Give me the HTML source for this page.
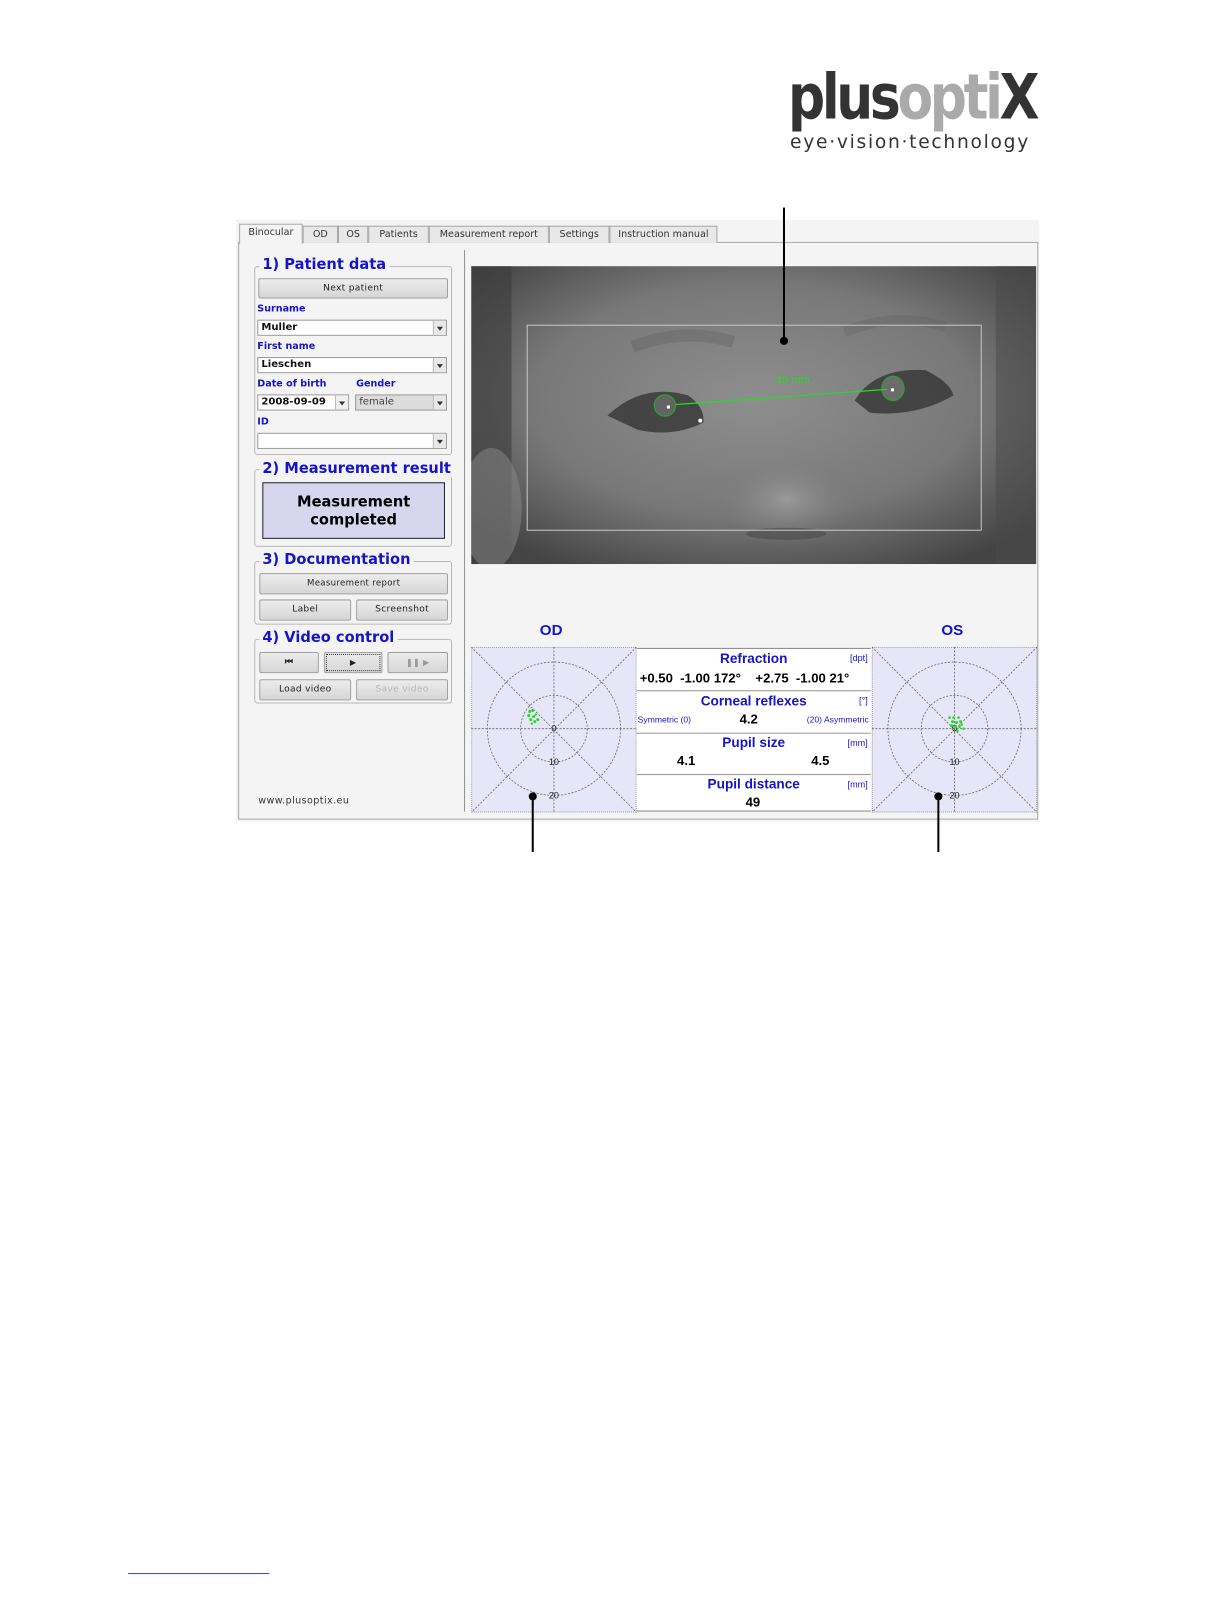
<!DOCTYPE html>
<html><head><meta charset="utf-8"><style>
*{margin:0;padding:0;box-sizing:border-box}
html,body{width:1224px;height:1584px;background:#fff;overflow:hidden;font-family:"DejaVu Sans","Liberation Sans",sans-serif}
#w{position:absolute;left:0;top:0;width:1224px;height:1584px;transform-origin:0 0;transform:translate(1px,0.5px) scale(1.009,1.01)}
.a{position:absolute}
.tab{position:absolute;top:223px;height:17px;border:1px solid #a8a8a8;border-bottom:none;background:#e8e8e8;font-size:9.5px;color:#333;text-align:center;line-height:15px}
.grp{position:absolute;border:1px solid #b8b8b8;border-radius:3px}
.gt{position:absolute;background:#f4f4f4;color:#1414c8;font-weight:bold;font-size:14.5px;padding:0 3px;line-height:16px;white-space:nowrap}
.btn{position:absolute;border:1px solid #a0a0a0;border-radius:2px;background:linear-gradient(#ececec,#d6d6d6);font-size:9px;color:#222;text-align:center;letter-spacing:.3px}
.lbl{position:absolute;color:#1414c8;font-weight:bold;font-size:9.5px;line-height:11px}
.cb{position:absolute;border:1px solid #9a9a9a;background:#fff;font-size:10px;color:#111;padding-left:3px;line-height:14px;font-weight:bold}
.cb i{position:absolute;right:0;top:0;width:13px;height:100%;border-left:1px solid #bbb;background:#e8e8e8}
.cb i:after{content:"";position:absolute;left:3px;top:6px;border-left:3.5px solid transparent;border-right:3.5px solid transparent;border-top:4px solid #333}
.tr{position:absolute;left:630px;width:232px;border-bottom:1px solid #888;background:#fff}
.th{position:absolute;left:0;width:100%;text-align:center;color:#1414c8;font-weight:bold;font-family:"Liberation Sans",sans-serif;font-size:13.5px}
.un{position:absolute;right:3px;color:#1414c8;font-size:9px;font-family:"Liberation Sans",sans-serif}
.v{position:absolute;font-weight:bold;font-family:"Liberation Sans",sans-serif;font-size:13px;color:#000}
</style></head><body><div id="w">

<!-- logo -->
<div class="a" style="left:780px;top:58px;font-family:'DejaVu Sans',sans-serif;font-weight:bold;font-size:62px;letter-spacing:-4px;line-height:76px;white-space:nowrap;transform-origin:0 0;transform:scaleX(0.83)"><span style="color:#333">plus</span><span style="color:#aaa">opti</span><span style="color:#333">X</span></div>
<div class="a" style="left:782px;top:130px;font-family:'DejaVu Sans',sans-serif;font-size:18.5px;letter-spacing:1.7px;color:#333;line-height:22px;white-space:nowrap">eye·vision·technology</div>

<!-- window -->
<div class="a" style="left:233px;top:217px;width:796px;height:596px;background:#f4f4f4"></div>
<div class="a" style="left:235px;top:239px;width:793px;height:572px;border:1px solid #a8a8a8;background:#f4f4f4"></div>
<div class="tab" style="left:236px;top:221px;height:20px;width:63px;background:#f4f4f4">Binocular</div>
<div class="tab" style="left:299px;width:35px">OD</div>
<div class="tab" style="left:334px;width:30px">OS</div>
<div class="tab" style="left:364px;width:60px">Patients</div>
<div class="tab" style="left:424px;width:119px">Measurement report</div>
<div class="tab" style="left:543px;width:60px">Settings</div>
<div class="tab" style="left:603px;width:107px">Instruction manual</div>
<div class="a" style="left:459px;top:247px;width:2px;height:556px;border-left:1px solid #888;border-right:1px solid #fff"></div>

<!-- group 1 -->
<div class="grp" style="left:251px;top:263px;width:196px;height:187px"></div>
<div class="gt" style="left:256px;top:254px">1) Patient data</div>
<div class="btn" style="left:255px;top:275px;width:188px;height:20px;line-height:18px">Next patient</div>
<div class="lbl" style="left:254px;top:300px">Surname</div>
<div class="cb" style="left:254px;top:316px;width:188px;height:16px">Muller<i></i></div>
<div class="lbl" style="left:254px;top:337px">First name</div>
<div class="cb" style="left:254px;top:353px;width:188px;height:16px">Lieschen<i></i></div>
<div class="lbl" style="left:254px;top:374px">Date of birth</div>
<div class="lbl" style="left:352px;top:374px">Gender</div>
<div class="cb" style="left:254px;top:390px;width:91px;height:16px">2008-09-09<i style="background:#f0f0f0"></i></div>
<div class="cb" style="left:351px;top:390px;width:91px;height:16px;background:#dcdcdc;font-weight:normal;color:#444">female<i></i></div>
<div class="lbl" style="left:254px;top:412px">ID</div>
<div class="cb" style="left:254px;top:428px;width:188px;height:16px"><i></i></div>

<!-- group 2 -->
<div class="grp" style="left:251px;top:464px;width:196px;height:77px"></div>
<div class="gt" style="left:256px;top:456px">2) Measurement result</div>
<div class="a" style="left:259px;top:477px;width:181px;height:56px;border:1px solid #222;background:#d8d6ee;text-align:center;font-weight:bold;font-size:14.5px;line-height:18px;padding-top:10px;color:#000">Measurement<br>completed</div>

<!-- group 3 -->
<div class="grp" style="left:251px;top:555px;width:196px;height:63px"></div>
<div class="gt" style="left:256px;top:546px">3) Documentation</div>
<div class="btn" style="left:256px;top:567px;width:187px;height:21px;line-height:19px;font-size:8.5px">Measurement report</div>
<div class="btn" style="left:256px;top:593px;width:91px;height:21px;line-height:19px">Label</div>
<div class="btn" style="left:352px;top:593px;width:91px;height:21px;line-height:19px">Screenshot</div>

<!-- group 4 -->
<div class="grp" style="left:251px;top:632px;width:196px;height:64px"></div>
<div class="gt" style="left:256px;top:623px">4) Video control</div>
<div class="btn" style="left:256px;top:645px;width:59px;height:21px;line-height:19px;font-weight:bold;font-size:9px">⏮</div>
<div class="btn" style="left:320px;top:645px;width:58px;height:21px;line-height:19px;outline:1px dotted #333;outline-offset:-3px;font-size:8px">▶</div>
<div class="btn" style="left:383px;top:645px;width:60px;height:21px;line-height:19px;color:#999;font-size:8px">❚❚ ▶</div>
<div class="btn" style="left:256px;top:672px;width:91px;height:21px;line-height:19px">Load video</div>
<div class="btn" style="left:352px;top:672px;width:91px;height:21px;line-height:19px;color:#b8b8b8">Save video</div>
<div class="a" style="left:255px;top:787px;font-size:9.5px;color:#333;letter-spacing:.4px">www.plusoptix.eu</div>

<!-- photo -->
<svg class="a" style="left:466px;top:263px" width="560" height="295" viewBox="0 0 560 295">
<defs>
<radialGradient id="f" cx="0.5" cy="0.45" r="0.65"><stop offset="0" stop-color="#8e8e8e"/><stop offset="0.6" stop-color="#787878"/><stop offset="1" stop-color="#444"/></radialGradient>
<radialGradient id="n" cx="0.5" cy="0.4" r="0.5"><stop offset="0" stop-color="#9a9a9a"/><stop offset="1" stop-color="#7a7a7a" stop-opacity="0"/></radialGradient>
</defs>
<rect width="560" height="295" fill="url(#f)"/>
<rect x="0" y="0" width="40" height="295" fill="#3c3c3c" opacity=".6"/>
<rect x="520" y="0" width="40" height="295" fill="#4a4a4a" opacity=".5"/>
<ellipse cx="20" cy="240" rx="30" ry="60" fill="#8a8a8a" opacity=".5"/>
<path d="M160 80 Q210 60 260 75" stroke="#5e5e5e" stroke-width="12" fill="none" opacity=".35"/>
<path d="M370 65 Q420 45 470 60" stroke="#5e5e5e" stroke-width="10" fill="none" opacity=".3"/>
<path d="M135 148 Q170 115 215 128 Q232 140 230 155 Q200 170 165 162 Z" fill="#3a3a3a" opacity=".85"/>
<path d="M380 133 Q400 100 450 103 Q475 115 478 128 Q440 150 395 145 Z" fill="#3a3a3a" opacity=".85"/>
<ellipse cx="312" cy="240" rx="70" ry="45" fill="url(#n)"/>
<ellipse cx="312" cy="265" rx="40" ry="6" fill="#444" opacity=".5"/>
<rect x="55.5" y="58.5" width="450" height="203" fill="none" stroke="#c8c8c8" stroke-width="1"/>
<line x1="203" y1="137" x2="412" y2="122" stroke="#22dd22" stroke-width="1.2"/>
<circle cx="192" cy="138" r="10.5" fill="#777" opacity=".6" stroke="#22dd22" stroke-width="1.2"/>
<ellipse cx="418" cy="121" rx="11" ry="12" fill="#888" opacity=".6" stroke="#22dd22" stroke-width="1.2"/>
<rect x="194" y="138" width="3" height="3" fill="#fff"/><rect x="416" y="121" width="3" height="3" fill="#fff"/>
<circle cx="227" cy="153" r="2" fill="#fff"/>
<text x="302" y="116" fill="#22dd22" font-family="Liberation Sans,sans-serif" font-size="11">49 mm</text>
</svg>

<div class="a" style="left:534px;top:615px;color:#1414c8;font-weight:bold;font-family:'Liberation Sans',sans-serif;font-size:15px">OD</div>
<div class="a" style="left:932px;top:615px;color:#1414c8;font-weight:bold;font-family:'Liberation Sans',sans-serif;font-size:15px">OS</div>

<!-- charts -->
<svg class="a" style="left:466px;top:640px" width="164" height="164" viewBox="0 0 164 164">
<rect x=".5" y=".5" width="163" height="163" fill="#e6e6f8" stroke="#999" stroke-dasharray="1 1"/>
<g stroke="#666" stroke-width=".8" stroke-dasharray="2 1.5" fill="none">
<line x1="0" y1="0" x2="164" y2="164"/><line x1="164" y1="0" x2="0" y2="164"/>
<line x1="0" y1="81" x2="164" y2="81"/><line x1="82" y1="0" x2="82" y2="164"/>
<circle cx="82" cy="81" r="33"/><circle cx="82" cy="81" r="66"/></g>
<g font-family="Liberation Sans,sans-serif" font-size="9" fill="#222" text-anchor="middle"><text x="82" y="84">0</text><text x="82" y="117">10</text><text x="82" y="150">20</text></g>
<g fill="#22dd22"><circle cx="58" cy="64" r="1.5"/><circle cx="61" cy="63" r="1.5"/><circle cx="57" cy="68" r="1.5"/><circle cx="59" cy="72" r="1.5"/><circle cx="63" cy="74" r="1.5"/><circle cx="66" cy="72" r="1.5"/><circle cx="62" cy="69" r="1.5"/><circle cx="60" cy="76" r="1.2"/><circle cx="64" cy="67" r="1.2"/></g>
</svg>
<svg class="a" style="left:863px;top:640px" width="164" height="164" viewBox="0 0 164 164">
<rect x=".5" y=".5" width="163" height="163" fill="#e6e6f8" stroke="#999" stroke-dasharray="1 1"/>
<g stroke="#666" stroke-width=".8" stroke-dasharray="2 1.5" fill="none">
<line x1="0" y1="0" x2="164" y2="164"/><line x1="164" y1="0" x2="0" y2="164"/>
<line x1="0" y1="81" x2="164" y2="81"/><line x1="82" y1="0" x2="82" y2="164"/>
<circle cx="82" cy="81" r="33"/><circle cx="82" cy="81" r="66"/></g>
<g font-family="Liberation Sans,sans-serif" font-size="9" fill="#222" text-anchor="middle"><text x="82" y="84">0</text><text x="82" y="117">10</text><text x="82" y="150">20</text></g>
<g fill="#22dd22"><circle cx="77" cy="70" r="1.3"/><circle cx="81" cy="70" r="1.3"/><circle cx="86" cy="70" r="1.3"/><circle cx="80" cy="74" r="1.5"/><circle cx="84" cy="75" r="1.5"/><circle cx="88" cy="74" r="1.5"/><circle cx="79" cy="78" r="1.5"/><circle cx="83" cy="79" r="1.5"/><circle cx="87" cy="79" r="1.3"/><circle cx="91" cy="81" r="1.3"/><circle cx="85" cy="83" r="1.3"/><circle cx="89" cy="77" r="1.3"/></g>
</svg>

<!-- table -->
<div class="tr" style="top:641px;height:43px;border-top:1px solid #888">
<div class="th" style="top:2px">Refraction</div><div class="un" style="top:4px">[dpt]</div>
<div class="v" style="left:3px;top:21px">+0.50&nbsp; -1.00 172°&nbsp;&nbsp;&nbsp; +2.75&nbsp; -1.00 21°</div></div>
<div class="tr" style="top:684px;height:42px">
<div class="th" style="top:2px">Corneal reflexes</div><div class="un" style="top:4px">[°]</div>
<div class="a" style="left:1px;top:23px;font-size:8.5px;color:#1414c8;font-family:'Liberation Sans',sans-serif">Symmetric (0)</div>
<div class="v" style="left:102px;top:20px">4.2</div>
<div class="a" style="right:2px;top:23px;font-size:8.5px;color:#1414c8;font-family:'Liberation Sans',sans-serif">(20) Asymmetric</div></div>
<div class="tr" style="top:726px;height:41px">
<div class="th" style="top:1px">Pupil size</div><div class="un" style="top:4px">[mm]</div>
<div class="v" style="left:40px;top:19px">4.1</div><div class="v" style="left:173px;top:19px">4.5</div></div>
<div class="tr" style="top:767px;height:36px">
<div class="th" style="top:1px">Pupil distance</div><div class="un" style="top:4px">[mm]</div>
<div class="v" style="left:108px;top:19px">49</div></div>

<!-- pointers -->
<div class="a" style="left:775px;top:205px;width:2px;height:132px;background:#000"></div>
<div class="a" style="left:772px;top:333px;width:8px;height:8px;border-radius:50%;background:#000"></div>
<div class="a" style="left:526px;top:788px;width:2px;height:55px;background:#000"></div>
<div class="a" style="left:523px;top:784px;width:8px;height:8px;border-radius:50%;background:#000"></div>
<div class="a" style="left:928px;top:788px;width:2px;height:55px;background:#000"></div>
<div class="a" style="left:925px;top:784px;width:8px;height:8px;border-radius:50%;background:#000"></div>

<div class="a" style="left:126px;top:1557px;width:140px;height:1px;background:#3344cc"></div>
</div></body></html>
